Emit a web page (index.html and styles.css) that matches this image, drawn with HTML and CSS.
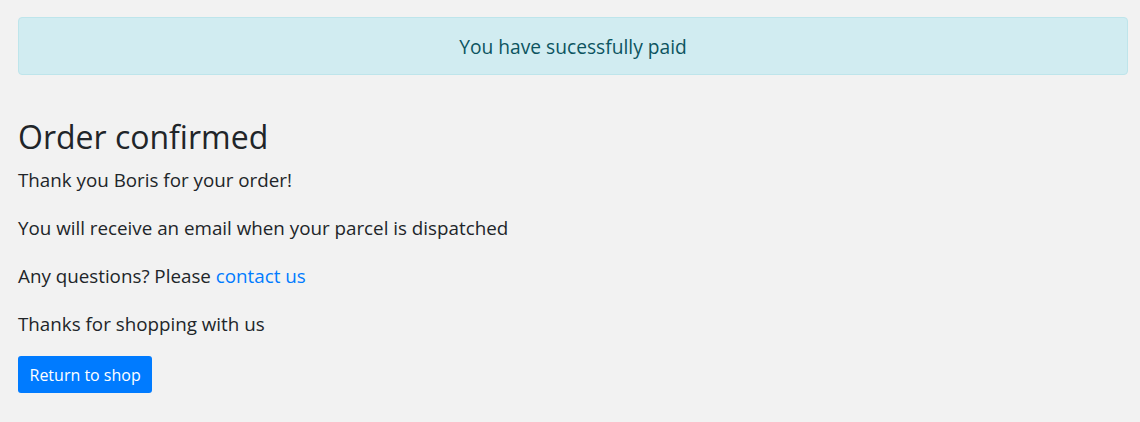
FILE: index.html
```html
<!DOCTYPE html>
<html lang="en">
<head>
<meta charset="utf-8">
<title>Order confirmed</title>
<link rel="stylesheet" href="styles.css">
</head>
<body>
<main class="page">
  <div class="alert">You have sucessfully paid</div>
  <section class="confirm">
    <h2 class="title">Order confirmed</h2>
    <p class="text">Thank you Boris for your order!</p>
    <p class="text">You will receive an email when your parcel is dispatched</p>
    <p class="text">Any questions? Please <a class="link" href="#">contact us</a></p>
    <p class="text">Thanks for shopping with us</p>
    <a class="btn" href="#">Return to shop</a>
  </section>
</main>
</body>
</html>
```

FILE: styles.css
```css
html, body {
  margin: 0;
  padding: 0;
  background: #f2f2f2;
}

body {
  font-family: "Open Sans", "Noto Sans", sans-serif;
  color: #212529;
  font-size: 18.8px;
}

.page {
  padding: 17px 12px 0 18px;
}

.alert {
  box-sizing: border-box;
  height: 58px;
  display: flex;
  align-items: center;
  justify-content: center;
  background: #d1ecf1;
  border: 1px solid #bee5eb;
  border-radius: 4px;
  color: #0c5460;
  font-size: 19.2px;
}

.confirm {
  padding-top: 40px;
}

.title {
  margin: 0 0 9px;
  font-size: 32px;
  font-weight: 400;
  line-height: 43px;
}

.text {
  margin: 0 0 21px;
  line-height: 27px;
}

.link {
  color: #007bff;
  text-decoration: none;
}

.btn {
  display: inline-flex;
  align-items: center;
  box-sizing: border-box;
  height: 37px;
  padding: 0 11.5px;
  margin-top: -3px;
  background: #007bff;
  color: #fff;
  border-radius: 3px;
  font-size: 16px;
  text-decoration: none;
}
```
